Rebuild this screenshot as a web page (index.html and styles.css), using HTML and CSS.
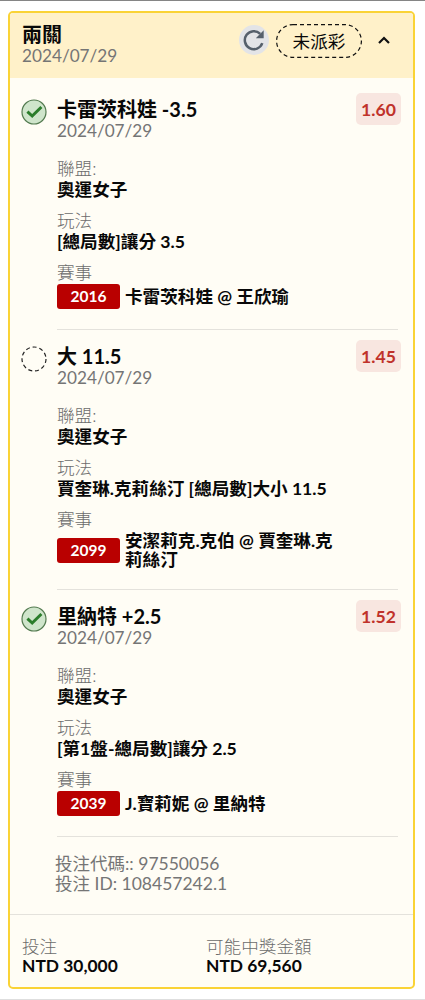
FILE: index.html
```html
<!DOCTYPE html>
<html lang="zh-Hant">

<head>
  <meta charset="utf-8">
  <title>注單</title>
  <link rel="stylesheet" href="styles.css">
</head>

<body>
  <div class="bet-card">
    <div class="card-header">
      <div class="card-title">
        <div class="title">兩關</div>
        <div class="date">2024/07/29</div>
      </div>
      <button class="refresh">
        <svg width="22" height="22" viewBox="0 0 22 22">
          <path d="M19.3 14.2A9 9 0 1 1 17.2 4.8" fill="none" stroke="#56606b" stroke-width="2.5"/>
          <path d="M20.7 1.3V9.2H12.8Z" fill="#56606b"/>
        </svg>
      </button>
      <div class="status">
        <svg width="86" height="34" viewBox="0 0 86 34">
          <rect x="0.6" y="0.6" width="84.8" height="32.8" rx="16.4" fill="none" stroke="#111" stroke-width="1.2" stroke-dasharray="4 3"/>
        </svg>
        <span>未派彩</span>
      </div>
      <svg class="chevron" width="12" height="8" viewBox="0 0 12 8">
        <path d="M1 7L6 2L11 7" fill="none" stroke="#111" stroke-width="2.2"/>
      </svg>
    </div>

    <div class="leg">
      <svg class="leg-icon" width="26" height="26" viewBox="0 0 26 26">
        <circle cx="13" cy="13" r="12" fill="#cfe5cb" stroke="#527a4f" stroke-width="1.2"/>
        <path d="M6.4 12.6L11.2 17L20.4 8" fill="none" stroke="#2b7d2b" stroke-width="3"/>
      </svg>
      <div class="leg-body">
        <div class="leg-top">
          <div>
            <div class="title">卡雷茨科娃 -3.5</div>
            <div class="date">2024/07/29</div>
          </div>
          <div class="odds">1.60</div>
        </div>
        <div class="label">聯盟:</div>
        <div class="value">奧運女子</div>
        <div class="label">玩法</div>
        <div class="value">[總局數]讓分 3.5</div>
        <div class="label">賽事</div>
        <div class="match">
          <span class="match-id">2016</span>
          <span class="teams">卡雷茨科娃 @ 王欣瑜</span>
        </div>
      </div>
    </div>

    <div class="leg">
      <svg class="leg-icon" width="26" height="26" viewBox="0 0 26 26">
        <circle cx="13" cy="13" r="12" fill="none" stroke="#222" stroke-width="1.2" stroke-dasharray="4 2.85"/>
      </svg>
      <div class="leg-body">
        <div class="leg-top">
          <div>
            <div class="title">大 11.5</div>
            <div class="date">2024/07/29</div>
          </div>
          <div class="odds">1.45</div>
        </div>
        <div class="label">聯盟:</div>
        <div class="value">奧運女子</div>
        <div class="label">玩法</div>
        <div class="value">賈奎琳.克莉絲汀 [總局數]大小 11.5</div>
        <div class="label">賽事</div>
        <div class="match">
          <span class="match-id">2099</span>
          <span class="teams">安潔莉克.克伯 @ 賈奎琳.克莉絲汀</span>
        </div>
      </div>
    </div>

    <div class="leg">
      <svg class="leg-icon" width="26" height="26" viewBox="0 0 26 26">
        <circle cx="13" cy="13" r="12" fill="#cfe5cb" stroke="#527a4f" stroke-width="1.2"/>
        <path d="M6.4 12.6L11.2 17L20.4 8" fill="none" stroke="#2b7d2b" stroke-width="3"/>
      </svg>
      <div class="leg-body">
        <div class="leg-top">
          <div>
            <div class="title">里納特 +2.5</div>
            <div class="date">2024/07/29</div>
          </div>
          <div class="odds">1.52</div>
        </div>
        <div class="label">聯盟:</div>
        <div class="value">奧運女子</div>
        <div class="label">玩法</div>
        <div class="value">[第1盤-總局數]讓分 2.5</div>
        <div class="label">賽事</div>
        <div class="match">
          <span class="match-id">2039</span>
          <span class="teams">J.寶莉妮 @ 里納特</span>
        </div>
      </div>
    </div>

    <div class="bet-info">
      <div>投注代碼:: 97550056</div>
      <div>投注 ID: 108457242.1</div>
    </div>

    <div class="card-footer">
      <div class="amount">
        <div class="amount-label">投注</div>
        <div class="amount-value">NTD 30,000</div>
      </div>
      <div class="amount">
        <div class="amount-label">可能中獎金額</div>
        <div class="amount-value">NTD 69,560</div>
      </div>
    </div>
  </div>
</body>

</html>
```
FILE: styles.css
```css
* {
  box-sizing: border-box;
}

body {
  height: 1000px;
  margin: 0;
  padding: 10px 10px 0 8px;
  border-top: 1px solid #858585;
  border-bottom: 1px solid #dedede;
  background-color: #fff;
  color: #080808;
  font-family: Lato, "Noto Sans CJK TC", sans-serif;
  font-size: 17.6px;
}

.bet-card {
  height: 978px;
  border: 2px solid #fad336;
  border-radius: 5px;
  background-color: #fffdf5;
  overflow: hidden;
}

.card-header {
  display: flex;
  align-items: flex-start;
  height: 65px;
  padding: 10px 23px 0 12px;
  background-color: #fff1c9;
}

.card-title {
  flex: 1;
}

.title {
  font-size: 20px;
  font-weight: 700;
  line-height: 22px;
  white-space: nowrap;
}

.date {
  color: #757575;
  font-size: 17.2px;
  line-height: 21px;
}

.refresh {
  display: flex;
  align-items: center;
  justify-content: center;
  width: 30px;
  height: 30px;
  margin: 2px 7px 0 0;
  padding: 0;
  border: none;
  border-radius: 50%;
  background-color: #e3e4e7;
}

.status {
  position: relative;
  width: 86px;
  height: 34px;
  margin-top: 1px;
  line-height: 35px;
  text-align: center;
}

/* dashed pill outline behind the text */
.status svg {
  position: absolute;
  top: 0;
  left: 0;
}

.chevron {
  margin: 13px 0 0 16px;
}

.leg {
  display: flex;
  padding: 20px 15px 0 11px;
}

.leg-icon {
  flex: none;
  margin: 1px 10px 0 0;
}

.leg-body {
  flex: 1;
  padding-bottom: 20px;
  border-bottom: 1px solid #e4e2dc;
}

.leg + .leg {
  padding-top: 15px;
}

.leg-top {
  display: flex;
  justify-content: space-between;
  align-items: flex-start;
  margin-bottom: 17px;
}

.odds {
  width: 45px;
  height: 32px;
  margin: -5px -3px 0 0;
  border-radius: 5px;
  background-color: #f8e6e0;
  color: #c0322b;
  font-size: 17.6px;
  font-weight: 700;
  line-height: 33px;
  text-align: center;
}

.label {
  color: #6c6c6c;
  font-weight: 300;
  line-height: 21px;
}

.value {
  margin-bottom: 9px;
  font-weight: 700;
  line-height: 22px;
  white-space: nowrap;
}

.match {
  display: flex;
  align-items: center;
  padding-top: 1px;
}

.match-id {
  flex: none;
  width: 63px;
  height: 25px;
  margin-right: 5px;
  border-radius: 3px;
  background-color: #b90000;
  color: #fff;
  font-size: 15.5px;
  font-weight: 700;
  line-height: 25px;
  text-align: center;
}

.teams {
  width: 212px;
  font-weight: 700;
  line-height: 19px;
}

.bet-info {
  padding: 17px 12px 21px 45px;
  color: #757575;
  font-size: 17.5px;
  line-height: 19.5px;
}

.card-footer {
  display: flex;
  padding: 22px 12px 0;
  border-top: 1px solid #e4e2dc;
}

.amount {
  width: 184px;
  line-height: 19px;
}

.amount-label {
  color: #6c6c6c;
  font-weight: 300;
}

.amount-value {
  font-size: 17.4px;
  font-weight: 700;
}
```
